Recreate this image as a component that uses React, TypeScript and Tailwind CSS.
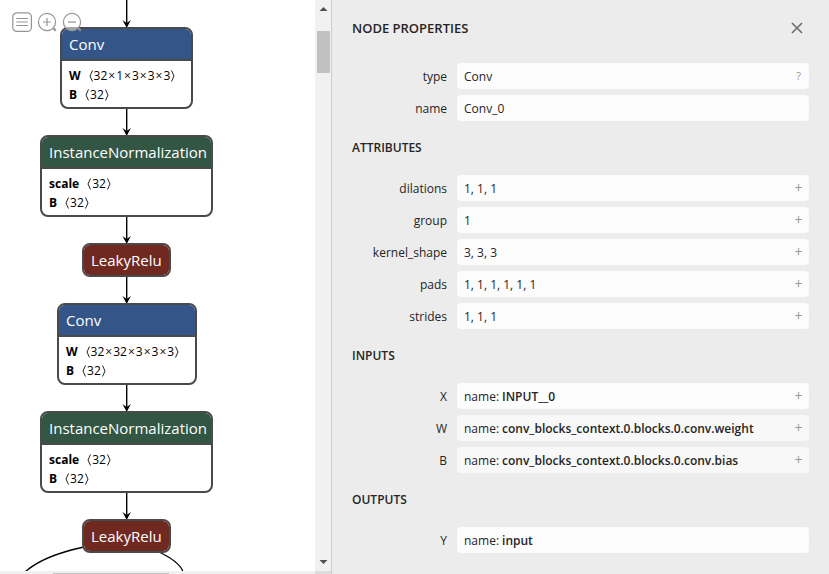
import React from "react";

type Param = { name: string; shape: string };
type GraphNode = { id: string; title: string; box: string; header: string; params: Param[] };

const blue = "bg-[#335588]";
const green = "bg-[#335544]";
const red = "bg-[#702921]";

const nodes: GraphNode[] = [
  {
    id: "conv0",
    title: "Conv",
    box: "left-[60px] top-[27px] w-[133px]",
    header: blue,
    params: [
      { name: "W", shape: "32×1×3×3×3" },
      { name: "B", shape: "32" },
    ],
  },
  {
    id: "norm0",
    title: "InstanceNormalization",
    box: "left-[40px] top-[135px] w-[173px]",
    header: green,
    params: [
      { name: "scale", shape: "32" },
      { name: "B", shape: "32" },
    ],
  },
  { id: "relu0", title: "LeakyRelu", box: "left-[82px] top-[243px] w-[89px]", header: red, params: [] },
  {
    id: "conv1",
    title: "Conv",
    box: "left-[57px] top-[303px] w-[140px]",
    header: blue,
    params: [
      { name: "W", shape: "32×32×3×3×3" },
      { name: "B", shape: "32" },
    ],
  },
  {
    id: "norm1",
    title: "InstanceNormalization",
    box: "left-[40px] top-[411px] w-[173px]",
    header: green,
    params: [
      { name: "scale", shape: "32" },
      { name: "B", shape: "32" },
    ],
  },
  { id: "relu1", title: "LeakyRelu", box: "left-[82px] top-[519px] w-[89px]", header: red, params: [] },
];

const edges = [
  [0, 27],
  [108, 135],
  [216, 243],
  [276, 303],
  [384, 411],
  [492, 519],
];

function NodeBox({ node }: { node: GraphNode }) {
  return (
    <div className={`absolute overflow-hidden rounded-lg border-2 border-[#4a4a4a] bg-white ${node.box}`}>
      <div className={`flex h-[30px] items-center px-[7px] text-[15px] whitespace-nowrap text-white ${node.header}`}>
        {node.title}
      </div>
      {node.params.length > 0 && (
        <div className="border-t-2 border-[#4a4a4a] px-[7px] pt-[5px] pb-[3px] text-xs leading-[19px] whitespace-nowrap text-black">
          {node.params.map((p) => (
            <div key={p.name} className="flex gap-2">
              <b>{p.name}</b>
              <Shape text={p.shape} />
            </div>
          ))}
        </div>
      )}
    </div>
  );
}

function Bracket({ d }: { d: string }) {
  return (
    <svg className="h-4 w-1" viewBox="0 0 4 16" fill="none" stroke="#222" strokeWidth="1" aria-hidden="true">
      <path d={d} />
    </svg>
  );
}

function Shape({ text }: { text: string }) {
  return (
    <span className="flex items-center gap-px">
      <Bracket d="M3.5 2.5 1 8l2.5 5.5" />
      <span>
        {text.split("×").map((dim, i) => (
          <React.Fragment key={i}>
            {i > 0 && <span className="mx-px">×</span>}
            {dim}
          </React.Fragment>
        ))}
      </span>
      <Bracket d="M.5 2.5 3 8 .5 13.5" />
    </span>
  );
}

function Toolbar() {
  const btn = "size-[21px]";
  const svg = { viewBox: "0 0 21 21", fill: "none", stroke: "#959595", strokeWidth: 1.2, className: "size-[21px]" };
  return (
    <div className="absolute top-3 left-3 flex gap-1">
      <button type="button" aria-label="Menu" className={btn}>
        <svg {...svg}>
          <rect x="0.8" y="0.8" width="18.6" height="18.6" rx="4" fill="#fff" fillOpacity="0.5" />
          <path d="M4.3 6.5h11.6M4.3 10h11.6M4.3 13.5h11.6" />
        </svg>
      </button>
      <button type="button" aria-label="Zoom in" className={btn}>
        <svg {...svg}>
          <circle cx="10" cy="10" r="8.6" fill="#fff" fillOpacity="0.5" />
          <path d="M6 10h8M10 6v8" />
          <path d="m16 16 2.8 2.8" strokeWidth="2.2" />
        </svg>
      </button>
      <button type="button" aria-label="Zoom out" className={btn}>
        <svg {...svg}>
          <circle cx="10" cy="10" r="8.6" fill="#fff" fillOpacity="0.5" />
          <path d="M6 10h8" />
          <path d="m16 16 2.8 2.8" strokeWidth="2.2" />
        </svg>
      </button>
    </div>
  );
}

function Graph() {
  return (
    <div className="relative min-w-0 flex-1 overflow-hidden bg-white">
      <svg className="absolute top-0 left-0" width="315" height="574" fill="none" stroke="#000" aria-hidden="true">
        {edges.map(([from, to]) => (
          <g key={from}>
            <path d={`M126.7 ${from}V${to - 2}`} strokeWidth="1.4" />
            <path d={`M126.7 ${to + 1}l-4.2 -8 4.2 3 4.2 -3z`} fill="#000" stroke="none" />
          </g>
        ))}
        <path d="M84 547C56 553 36 562 25 572" strokeWidth="1.3" />
        <path d="M157 551C172 558 181 565 183 572" strokeWidth="1.3" />
      </svg>
      {nodes.map((n) => (
        <NodeBox key={n.id} node={n} />
      ))}
      <Toolbar />
    </div>
  );
}

function VerticalScrollbar() {
  return (
    <div className="flex w-4 shrink-0 flex-col items-center bg-[#f1f1f1]" aria-hidden="true">
      <svg width="16" height="17" viewBox="0 0 16 17" fill="#505050">
        <path d="M4.5 11 8.5 7l4 4z" />
      </svg>
      <div className="mt-[14px] ml-px h-[42px] w-[13px] bg-[#c1c1c1]" />
      <svg className="mt-auto" width="16" height="17" viewBox="0 0 16 17" fill="#505050">
        <path d="M4.5 6 8.5 10l4-4z" />
      </svg>
    </div>
  );
}

type Row = { label: string; value: string; named?: boolean; action?: "?" | "+"; shade?: string };
type Section = { title: string; rows: Row[] };

const sections: Section[] = [
  {
    title: "NODE PROPERTIES",
    rows: [
      { label: "type", value: "Conv", action: "?" },
      { label: "name", value: "Conv_0" },
    ],
  },
  {
    title: "ATTRIBUTES",
    rows: [
      { label: "dilations", value: "1, 1, 1", action: "+" },
      { label: "group", value: "1", action: "+" },
      { label: "kernel_shape", value: "3, 3, 3", action: "+" },
      { label: "pads", value: "1, 1, 1, 1, 1, 1", action: "+" },
      { label: "strides", value: "1, 1, 1", action: "+" },
    ],
  },
  {
    title: "INPUTS",
    rows: [
      { label: "X", value: "INPUT__0", named: true, action: "+" },
      { label: "W", value: "conv_blocks_context.0.blocks.0.conv.weight", named: true, action: "+", shade: "bg-[#f8f8f8]" },
      { label: "B", value: "conv_blocks_context.0.blocks.0.conv.bias", named: true, action: "+", shade: "bg-[#f8f8f8]" },
    ],
  },
  { title: "OUTPUTS", rows: [{ label: "Y", value: "input", named: true }] },
];

function PropertyRow({ row, id }: { row: Row; id: string }) {
  return (
    <div className="flex items-center gap-[10px]">
      <label htmlFor={id} className="w-[95px] shrink-0 pt-0.5 text-right">
        {row.label}
      </label>
      <div className={`flex h-[26px] min-w-0 flex-1 items-center rounded-sm px-[7px] ${row.shade ?? "bg-[#fcfcfc]"}`}>
        {row.named && (
          <label htmlFor={id} className="shrink-0 pt-0.5 pr-[3px]">
            name:
          </label>
        )}
        <input
          id={id}
          readOnly
          value={row.value}
          className={`min-w-0 flex-1 bg-transparent pt-0.5 outline-none ${row.named ? "font-semibold" : ""}`}
        />
        {row.action && (
          <button
            type="button"
            aria-label={`${row.label} details`}
            className={`flex w-[7px] justify-center text-[#999] ${row.action === "+" ? "text-sm leading-5" : "text-[11px]"}`}
          >
            {row.action}
          </button>
        )}
      </div>
    </div>
  );
}

function Sidebar() {
  return (
    <aside className="min-w-0 flex-1 border-l border-[#ccc] bg-[#ececec] px-5 text-xs text-[#252525]">
      {sections.map((s, i) => (
        <section key={s.title}>
          <div className={`flex items-start justify-between ${i === 0 ? "h-[63px] pt-[18px]" : "h-[54px] pt-[17px]"}`}>
            <h2 className={`leading-5 font-semibold ${i === 0 ? "text-[13px]" : "text-xs"}`}>{s.title}</h2>
            {i === 0 && (
              <button type="button" aria-label="Close" className="flex h-5 w-6 items-center justify-center">
                <svg width="12" height="12" viewBox="0 0 12 12" stroke="#707070" strokeWidth="1.7">
                  <path d="m1 1 10 10M11 1 1 11" />
                </svg>
              </button>
            )}
          </div>
          <div className="flex flex-col gap-[6px]">
            {s.rows.map((r) => (
              <PropertyRow key={r.label} row={r} id={`${s.title.toLowerCase().replace(" ", "-")}-${r.label}`} />
            ))}
          </div>
        </section>
      ))}
    </aside>
  );
}

export default function App() {
  return (
    <main className="flex h-screen overflow-hidden bg-white font-['Open_Sans','Noto_Sans',sans-serif]">
      <div className="flex w-[331px] shrink-0 flex-col">
        <div className="flex min-h-0 flex-1">
          <Graph />
          <VerticalScrollbar />
        </div>
        <div className="flex h-[3px] shrink-0 bg-[#f1f1f1]" aria-hidden="true">
          <div className="mt-[2px] ml-[53px] w-[116px] bg-[#c1c1c1]" />
          <div className="ml-auto w-4 bg-[#dcdcdc]" />
        </div>
      </div>
      <Sidebar />
    </main>
  );
}
